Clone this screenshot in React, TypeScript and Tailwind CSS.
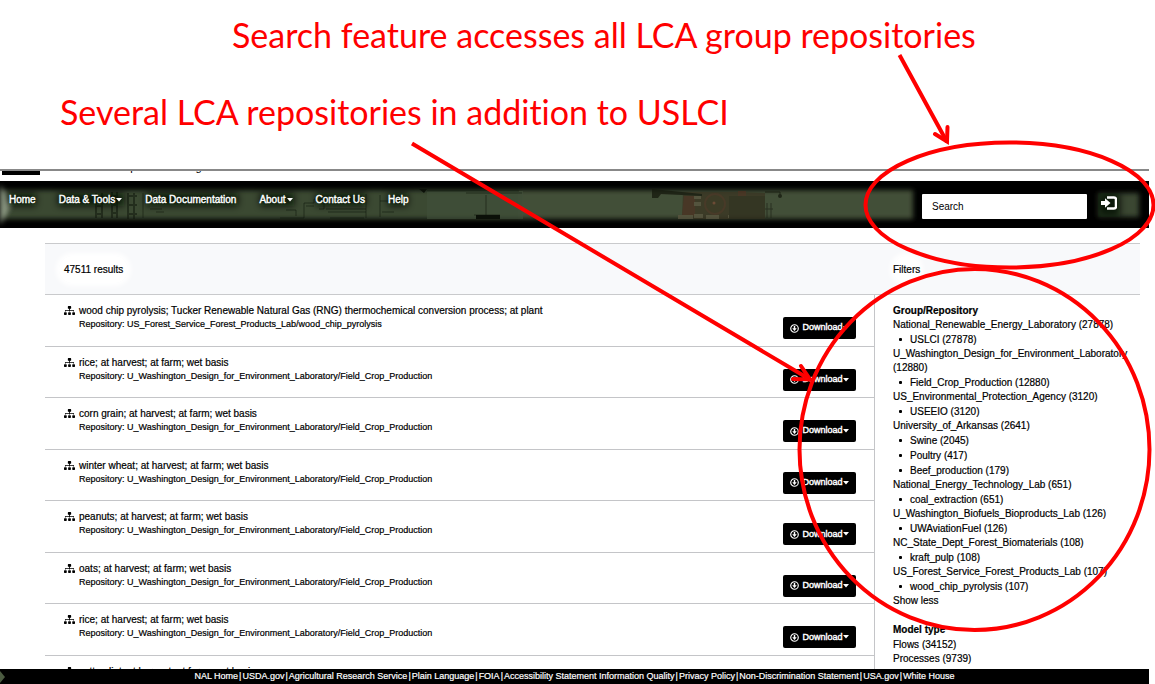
import React from "react";
import { FaSitemap } from "react-icons/fa";

const field = "U_Washington_Design_for_Environment_Laboratory/Field_Crop_Production";

const results = [
  {
    name: "wood chip pyrolysis; Tucker Renewable Natural Gas (RNG) thermochemical conversion process; at plant",
    repo: "US_Forest_Service_Forest_Products_Lab/wood_chip_pyrolysis",
  },
  { name: "rice; at harvest; at farm; wet basis", repo: field },
  { name: "corn grain; at harvest; at farm; wet basis", repo: field },
  { name: "winter wheat; at harvest; at farm; wet basis", repo: field },
  { name: "peanuts; at harvest; at farm; wet basis", repo: field },
  { name: "oats; at harvest; at farm; wet basis", repo: field },
  { name: "rice; at harvest; at farm; wet basis", repo: field },
];

const groups = [
  { name: "National_Renewable_Energy_Laboratory (27878)", repos: ["USLCI (27878)"] },
  { name: "U_Washington_Design_for_Environment_Laboratory (12880)", repos: ["Field_Crop_Production (12880)"] },
  { name: "US_Environmental_Protection_Agency (3120)", repos: ["USEEIO (3120)"] },
  { name: "University_of_Arkansas (2641)", repos: ["Swine (2045)", "Poultry (417)", "Beef_production (179)"] },
  { name: "National_Energy_Technology_Lab (651)", repos: ["coal_extraction (651)"] },
  { name: "U_Washington_Biofuels_Bioproducts_Lab (126)", repos: ["UWAviationFuel (126)"] },
  { name: "NC_State_Dept_Forest_Biomaterials (108)", repos: ["kraft_pulp (108)"] },
  { name: "US_Forest_Service_Forest_Products_Lab (107)", repos: ["wood_chip_pyrolysis (107)"] },
];

const footerLinks = [
  "NAL Home",
  "USDA.gov",
  "Agricultural Research Service",
  "Plain Language",
  "FOIA",
  "Accessibility Statement Information Quality",
  "Privacy Policy",
  "Non-Discrimination Statement",
  "USA.gov",
  "White House",
];

function Caret() {
  return (
    <svg viewBox="0 0 6 4" className="h-[4px] w-[6px] shrink-0" aria-hidden="true">
      <path d="M0 0h6L3 3.4z" fill="currentColor" />
    </svg>
  );
}

function NavBackdrop() {
  return (
    <svg
      className="absolute inset-0 h-full w-full"
      viewBox="0 0 1149 47"
      preserveAspectRatio="none"
      aria-hidden="true"
    >
      <defs>
        <filter id="soft" x="-10%" y="-50%" width="120%" height="200%">
          <feGaussianBlur stdDeviation="2.5" />
        </filter>
        <filter id="glow" x="-50%" y="-80%" width="200%" height="260%">
          <feGaussianBlur stdDeviation="3.5" />
        </filter>
      </defs>
      <rect width="1149" height="47" fill="#000" />
      <g filter="url(#soft)">
        <rect x="4" y="9" width="908" height="29" fill="#3b4a33" />
        <rect x="520" y="9" width="393" height="29" fill="#434f38" />
        <rect x="1098" y="12" width="41" height="24" fill="#3a4630" />
        <path d="M0 4L11 23 0 44z" fill="#8d9a83" />
      </g>
      <rect x="427" y="10" width="96" height="28" fill="#41503a" opacity=".6" />
      <g stroke="#11180d" fill="none" opacity=".55">
        <path
          d="M96 12v25M102 12v25M112 11v26M117 11v26M128 12v26M134 12v26M96 16h6M96 25h6M96 33h6M112 15h5M112 24h5M112 32h5M128 15h9M128 24h9M128 33h9"
          strokeWidth="2"
        />
        <path d="M143 12v25M150 28h12M156 31h8M280 37h24V22h10v-4h10v10h-5M286 29h10v6M306 25h8M326 28h40M328 31h38M330 37h34M366 13v24M380 14v22M380 20h10M382 31h12M427 10h92M466 12h56M474 34h26M486 14v20" />
      </g>
      <path d="M476 34h24v4h-24zM419 8h8l-3 4z" fill="#0b1008" />
      <g opacity=".75">
        <path d="M683 11h54l28 1v26h-83z" fill="#3a3522" />
        <path d="M684 15h11v20h-13zM738 10h8v5h-8z" fill="#4b3020" />
        <circle cx="715" cy="23" r="10" fill="#3b3521" stroke="#4a3323" strokeWidth="2" />
        <circle cx="714" cy="22" r="1.500" fill="#7a4a35" />
        <path d="M694 15h7v3h-7zM694 21h7v4h-7zM678 34h15v4h-15zM694 33h9v4h-9zM706 34h13v4h-13zM728 34h4v3h-4z" fill="#5b5640" />
        <path d="M652 8l50 5v2l-41-2-3 4h-6z" fill="#15190d" />
        <path d="M765 11h15v3" fill="none" stroke="#15190d" />
        <circle cx="780" cy="15" r="2" fill="#15190d" />
        <path d="M729 15h36v23h-36z" fill="#302e1d" />
        <path d="M767 22v15M771 22v15M765 28h8" stroke="#202719" />
      </g>
      <g filter="url(#glow)" fill="#050d02" opacity=".8">
        <rect x="8" y="12" width="28" height="13" />
        <rect x="58" y="12" width="66" height="13" />
        <rect x="146" y="12" width="92" height="13" />
        <rect x="260" y="12" width="34" height="13" />
        <rect x="316" y="12" width="50" height="13" />
        <rect x="388" y="12" width="20" height="13" />
        <rect x="1098" y="12" width="22" height="24" />
      </g>
    </svg>
  );
}

function Annotations() {
  return (
    <svg
      className="pointer-events-none absolute top-0 left-0 h-[684px] w-[1155px]"
      viewBox="0 0 1155 684"
      fill="none"
      stroke="#ff0000"
      strokeWidth="4"
      aria-hidden="true"
    >
      <ellipse cx="1009.5" cy="205" rx="144" ry="62.5" />
      <ellipse cx="974.5" cy="449.5" rx="175" ry="180.5" />
      <path d="M899.5 55L947 142M412 143.5L811 380" />
      <path d="M935 134L947 141.500 947.500 127M793 379L810 379.500 801 366" strokeLinecap="round" />
    </svg>
  );
}

const navItems = [
  { label: "Home", menu: false },
  { label: "Data & Tools", menu: true },
  { label: "Data Documentation", menu: false },
  { label: "About", menu: true },
  { label: "Contact Us", menu: false },
  { label: "Help", menu: false },
];

export default function App() {
  return (
    <div className="relative h-screen overflow-hidden bg-white font-['Liberation_Sans',Arial,sans-serif] text-[10px] text-black">
      <div className="flex h-full flex-col pr-[6px]">
        <div className="flex h-[169px] shrink-0 flex-col whitespace-nowrap font-['Lato',sans-serif] text-[34px] leading-[40px] text-[#ff0000] [font-variant-ligatures:none]">
          <p className="mt-[15px] ml-[232px]">Search feature accesses all LCA group repositories</p>
          <p className="mt-[37px] ml-[60px]">Several LCA repositories in addition to USLCI</p>
        </div>

        <div className="flex h-[12px] shrink-0 items-start gap-[7px] overflow-hidden border-t-2 border-[#888] pl-[2px]">
          <div className="h-[4px] w-[38px] bg-black" />
          <div className="flex h-[2px] items-end overflow-hidden">
            <span className="text-[11px] leading-[12px]">United States Department of Agriculture</span>
          </div>
        </div>

        <header className="relative flex h-[47px] shrink-0 items-center justify-between bg-black text-white">
          <NavBackdrop />
          <nav className="relative mb-[10px] flex gap-[23px] pl-[9px] [-webkit-text-stroke:0.4px_white]">
            {navItems.map((item) =>
              item.menu ? (
                <button key={item.label} className="flex items-center gap-px">
                  {item.label}
                  <Caret />
                </button>
              ) : (
                <a key={item.label} href="#">
                  {item.label}
                </a>
              ),
            )}
          </nav>
          <form className="relative flex items-center gap-3 pt-[3px] pr-[32px]">
            <input
              type="search"
              aria-label="Search"
              placeholder="Search"
              className="h-[25px] w-[165px] rounded-[1px] bg-white px-[10px] text-[10px] text-black outline-none placeholder:text-black"
            />
            <button type="button" aria-label="Log in" className="mb-[6px]">
              <svg viewBox="0 0 18 14" className="h-[14px] w-[18px]" aria-hidden="true">
                <path d="M8 1.500h7q2 0 2 2v7q0 2-2 2H8" fill="none" stroke="white" strokeWidth="2.500" />
                <path d="M2 5h4V2.200l5.500 4.800L6 11.800V9H2z" fill="white" />
              </svg>
            </button>
          </form>
        </header>

        <main className="mt-[15px] mr-[9px] ml-[45px] flex min-h-0 flex-1 flex-col overflow-hidden [-webkit-text-stroke:0.2px_black]">
          <div className="flex h-[52px] shrink-0 items-center border-y border-[#c9cacc] bg-[#f8f9fb]">
            <h1 className="flex-1 pl-[14px]">
              <span className="rounded-full bg-white px-[5px] py-2 shadow-[0_0_5px_3px_white]">47511 results</span>
            </h1>
            <h2 className="w-[247px]">
              <span className="rounded-full bg-white py-2 shadow-[0_0_5px_3px_white]">Filters</span>
            </h2>
          </div>

          <div className="flex min-h-0 flex-1">
            <section className="min-w-0 flex-1 border-r border-[#c4c5c8]">
              <ul className="grid min-h-[361px] auto-rows-fr">
                {results.map((item, index) => (
                  <li key={index} className="flex items-start border-b border-[#c4c5c8] pt-2 pl-[19px]">
                    <FaSitemap className="mt-[2px] mr-1 h-[11px] w-[11px]" />
                    <div className="min-w-0 flex-1">
                      <a href="#" className="block leading-[15px]">
                        {item.name}
                      </a>
                      <p className="text-[9px] leading-[13px]">Repository: {item.repo}</p>
                    </div>
                    <button className="mt-[14px] mr-[18px] flex h-[22px] w-[73px] items-center justify-center rounded-[2px] bg-black text-[9px] text-white [-webkit-text-stroke:0.4px_white]">
                      <svg viewBox="0 0 10 10" className="mr-[3px] h-[9px] w-[9px]" aria-hidden="true">
                        <circle cx="5" cy="5" r="4.200" fill="none" stroke="white" strokeWidth="1.300" />
                        <path d="M4.200 2.200h1.600v2.500h1.700L5 7.800 2.500 4.700h1.700z" fill="white" />
                      </svg>
                      Download
                      <Caret />
                    </button>
                  </li>
                ))}
              </ul>
              <div className="flex items-start pt-2 pl-[19px]">
                <FaSitemap className="mt-[2px] mr-1 h-[11px] w-[11px]" />
                <a href="#" className="leading-[15px]">
                  cotton lint; at harvest; at farm; wet basis
                </a>
              </div>
            </section>

            <aside className="w-[265px] pt-2 pl-[18px] leading-[14px]">
              <h3 className="leading-[15px] font-bold">Group/Repository</h3>
              <ul>
                {groups.map((group) => (
                  <li key={group.name}>
                    <a href="#">{group.name}</a>
                    <ul>
                      {group.repos.map((repo) => (
                        <li key={repo} className="flex items-center leading-[15px]">
                          <span className="mr-2 ml-[6px] h-[3px] w-[3px] rounded-[1px] bg-black" />
                          <a href="#">{repo}</a>
                        </li>
                      ))}
                    </ul>
                  </li>
                ))}
              </ul>
              <button className="block">Show less</button>
              <h3 className="mt-[15px] font-bold">Model type</h3>
              <ul>
                <li className="leading-[15px]">
                  <a href="#">Flows (34152)</a>
                </li>
                <li>
                  <a href="#">Processes (9739)</a>
                </li>
              </ul>
            </aside>
          </div>
        </main>

        <footer className="relative flex h-[15px] shrink-0 items-center justify-center bg-black pb-[2px] text-[9px] leading-[12px] whitespace-nowrap text-white [-webkit-text-stroke:0.2px_white]">
          <svg viewBox="0 0 6 15" className="absolute top-0 left-0 h-[15px] w-[6px]" aria-hidden="true">
            <path d="M0 2l5 6-5 6z" fill="#4c5b41" />
          </svg>
          {footerLinks.map((link, index) => (
            <React.Fragment key={link}>
              {index > 0 && <span className="mx-px">|</span>}
              <a href="#">{link}</a>
            </React.Fragment>
          ))}
        </footer>
      </div>
      <Annotations />
    </div>
  );
}
